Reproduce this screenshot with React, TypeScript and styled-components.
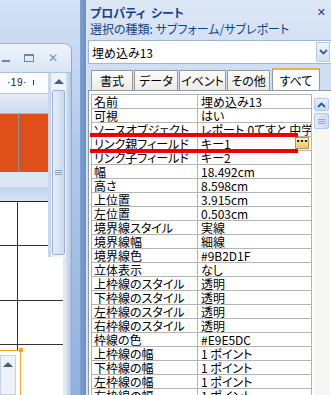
import styled, { createGlobalStyle } from 'styled-components';

const GlobalStyle = createGlobalStyle`
  html, body { margin: 0; padding: 0; }
  body {
    width: 331px;
    height: 395px;
    overflow: hidden;
    font-family: "Noto Sans CJK JP", "Liberation Sans", sans-serif;
    font-size: 12px;
    font-feature-settings: "palt";
  }
`;

type Prop = { name: string; value: string; marked?: boolean };

const props: Prop[] = [
  { name: '名前', value: '埋め込み13' },
  { name: '可視', value: 'はい' },
  { name: 'ソースオブジェクト', value: 'レポート.0てすと 中学校' },
  { name: 'リンク親フィールド', value: 'キー1', marked: true },
  { name: 'リンク子フィールド', value: 'キー2' },
  { name: '幅', value: '18.492cm' },
  { name: '高さ', value: '8.598cm' },
  { name: '上位置', value: '3.915cm' },
  { name: '左位置', value: '0.503cm' },
  { name: '境界線スタイル', value: '実線' },
  { name: '境界線幅', value: '細線' },
  { name: '境界線色', value: '#9B2D1F' },
  { name: '立体表示', value: 'なし' },
  { name: '上枠線のスタイル', value: '透明' },
  { name: '下枠線のスタイル', value: '透明' },
  { name: '左枠線のスタイル', value: '透明' },
  { name: '右枠線のスタイル', value: '透明' },
  { name: '枠線の色', value: '#E9E5DC' },
  { name: '上枠線の幅', value: '1 ポイント' },
  { name: '下枠線の幅', value: '1 ポイント' },
  { name: '左枠線の幅', value: '1 ポイント' },
  { name: '右枠線の幅', value: '1 ポイント' },
];

const tabs = [
  { label: '書式', width: 42 },
  { label: 'データ', width: 44 },
  { label: 'イベント', width: 47 },
  { label: 'その他', width: 43 },
  { label: 'すべて', width: 48, active: true },
];

export default function App() {
  return (
    <Screen>
      <GlobalStyle />
      <LeftArea>
        <DocWindow>
          <TitleBar>
            <MinGlyph />
            <MaxGlyph />
            <CloseGlyph>✕</CloseGlyph>
          </TitleBar>
          <DocBody>
            <Canvas>
              <UpperPart>
                <Designer>
                  <Ruler>
                    <RulerText>·19·</RulerText>
                    <RulerTick />
                  </Ruler>
                  <GapBand />
                  <OrangeSection>
                    <OrangeCell />
                    <OrangeCell />
                  </OrangeSection>
                  <SectionBar />
                  <GridArea $height={55} />
                </Designer>
                <VScroll>
                  <ScrollBtn>
                    <UpArrow />
                  </ScrollBtn>
                  <ScrollThumb>
                    <Grip />
                  </ScrollThumb>
                </VScroll>
              </UpperPart>
              <LowerPart>
                <GridArea $height={93} />
                <Selection>
                  <SelectHandle />
                  <MiniScroll>
                    <UpArrow />
                  </MiniScroll>
                </Selection>
              </LowerPart>
            </Canvas>
            <WindowEdge />
          </DocBody>
        </DocWindow>
      </LeftArea>
      <Splitter />
      <Panel>
        <PanelHeader>
          <PanelTitle>プロパティ シート</PanelTitle>
          <PanelClose>✕</PanelClose>
        </PanelHeader>
        <SelectionType>選択の種類: サブフォーム/サブレポート</SelectionType>
        <Combo>
          <ComboText>埋め込み13</ComboText>
          <ComboButton>
            <svg width="9" height="6" viewBox="0 0 9 6">
              <path d="M1 1 L4.5 4.5 L8 1" stroke="#3c5f97" strokeWidth="1.8" fill="none" />
            </svg>
          </ComboButton>
        </Combo>
        <TabStrip>
          {tabs.map((t) => (
            <Tab key={t.label} $active={!!t.active} style={{ width: t.width }}>
              {t.label}
            </Tab>
          ))}
        </TabStrip>
        <Sheet>
          <Table>
            {props.map((p) => (
              <Row key={p.name}>
                <NameCell>{p.name}</NameCell>
                <ValueCell>
                  {p.value}
                  {p.marked && <BuildButton>···</BuildButton>}
                </ValueCell>
                {p.marked && <RedMark />}
              </Row>
            ))}
          </Table>
          <SheetScroll>
            <SheetScrollBtn>
              <svg width="9" height="6" viewBox="0 0 9 6">
                <path d="M1 5 L4.5 1.5 L8 5" stroke="#2f5a9a" strokeWidth="1.8" fill="none" />
              </svg>
            </SheetScrollBtn>
            <SheetThumb>
              <Grip />
            </SheetThumb>
          </SheetScroll>
        </Sheet>
      </Panel>
    </Screen>
  );
}

const Screen = styled.div`
  display: flex;
  width: 331px;
  height: 395px;
  overflow: hidden;
  background: linear-gradient(to bottom, #d3e2f5 0%, #b3cbeb 35%, #90b0de 100%);
`;

const LeftArea = styled.div`
  width: 80px;
  flex-shrink: 0;
  display: flex;
  flex-direction: column;
  padding-top: 43px;
  box-sizing: border-box;
`;

const DocWindow = styled.div`
  width: 71px;
  flex: 1;
  display: flex;
  flex-direction: column;
  border-top: 1px solid #9cb4d6;
  border-right: 1px solid #8eaad2;
  border-top-right-radius: 8px;
  background: #c9daf0;
  overflow: hidden;
`;

const TitleBar = styled.div`
  height: 28px;
  display: flex;
  align-items: center;
  justify-content: flex-end;
  gap: 14px;
  padding-right: 13px;
  background: linear-gradient(to bottom, #eef4fc, #dae6f5);
  border-bottom: 1px solid #a9bfdc;
  margin-left: -6px;
`;

const MinGlyph = styled.span`
  width: 8px;
  height: 2px;
  background: #6c84a6;
  margin-top: 6px;
`;

const MaxGlyph = styled.span`
  width: 8px;
  height: 5px;
  border: 1px solid #6c84a6;
  border-top-width: 2px;
`;

const CloseGlyph = styled.span`
  font-family: "DejaVu Sans", sans-serif;
  font-size: 12px;
  font-weight: bold;
  color: #7d93b4;
  line-height: 1;
`;

const DocBody = styled.div`
  flex: 1;
  display: flex;
`;

const Canvas = styled.div`
  flex: 1;
  display: flex;
  flex-direction: column;
`;

const UpperPart = styled.div`
  display: flex;
  height: 184px;
`;

const Designer = styled.div`
  flex: 1;
  display: flex;
  flex-direction: column;
  border-right: 3px solid #c6d8ef;
`;

const Ruler = styled.div`
  height: 20px;
  display: flex;
  align-items: center;
  gap: 6px;
  padding-left: 7px;
  background: #fbfcfe;
  border-bottom: 1px solid #b7c9e2;
`;

const RulerText = styled.span`
  font-family: "Liberation Sans", sans-serif;
  font-size: 10px;
  color: #222;
  letter-spacing: 0.5px;
`;

const RulerTick = styled.span`
  width: 1px;
  height: 5px;
  background: #333;
`;

const GapBand = styled.div`
  height: 19px;
  background: linear-gradient(to bottom, #e3ecf8, #cddcf0);
  border-bottom: 1px solid #9fb6d6;
`;

const OrangeSection = styled.div`
  height: 59px;
  display: grid;
  grid-template-columns: 18px 1fr;
  gap: 1px;
  background-color: #8494a8;
`;

const OrangeCell = styled.div`
  background: #de4f19;
`;

const SectionBar = styled.div`
  height: 29px;
  background: linear-gradient(to bottom, #dbe7f6 0%, #dbe7f6 50%, #c3d6ef 52%, #d5e3f5 100%);
  border-bottom: 1px solid #222;
`;

const GridArea = styled.div<{ $height: number }>`
  height: ${(p) => p.$height}px;
  background-color: #fff;
  background-image: linear-gradient(to right, transparent 17px, #333 17px, #333 18px, transparent 18px),
    linear-gradient(to bottom, transparent 43px, #333 43px, #333 44px, transparent 44px);
  background-size: 100% 44px;
`;

const VScroll = styled.div`
  width: 15px;
  display: flex;
  flex-direction: column;
  background: #eef3fa;
`;

const ScrollBtn = styled.div`
  height: 17px;
  display: flex;
  align-items: center;
  justify-content: center;
`;

const UpArrow = styled.span`
  width: 0;
  height: 0;
  border-left: 5px solid transparent;
  border-right: 5px solid transparent;
  border-bottom: 5px solid #4d5f78;
`;

const ScrollThumb = styled.div`
  flex: 1;
  margin: 0 1px 2px;
  display: flex;
  align-items: center;
  justify-content: center;
  border: 1px solid #9db1cf;
  border-radius: 2px;
  background: linear-gradient(to right, #e6eef9, #cbdaee);
`;

const Grip = styled.span`
  width: 7px;
  height: 5px;
  background: repeating-linear-gradient(to bottom, #8ea6c8 0, #8ea6c8 1px, transparent 1px, transparent 2px);
`;

const LowerPart = styled.div`
  flex: 1;
  display: flex;
  flex-direction: column;
  background: #fff;
  border-right: 3px solid #e4e9f0;
`;

const Selection = styled.div`
  flex: 1;
  position: relative;
  border-top: 1px solid #f6a623;
  width: 20px;
  border-right: 1px solid #f6a623;
`;

const SelectHandle = styled.span`
  position: absolute;
  right: -3px;
  top: -3px;
  width: 4px;
  height: 4px;
  background: #f6a623;
`;

const MiniScroll = styled.div`
  width: 16px;
  height: 40px;
  margin-top: 4px;
  display: flex;
  justify-content: center;
  padding-top: 6px;
  box-sizing: border-box;
  background: #eef3fa;
  border: 1px solid #c4d2e4;
`;

const WindowEdge = styled.div`
  width: 5px;
  background: linear-gradient(to right, #d4e2f4, #b4c9e6);
`;

const Splitter = styled.div`
  width: 6px;
  flex-shrink: 0;
  background: linear-gradient(to right, #7d9fd2, #6a90c8);
  border-right: 1px solid #e1eaf6;
`;

const Panel = styled.div`
  flex: 1;
  display: flex;
  flex-direction: column;
  padding: 0 2px 0 1px;
  background: linear-gradient(to bottom, #dde8f6, #cfdef2 60px);
`;

const PanelHeader = styled.div`
  height: 20px;
  display: flex;
  align-items: center;
  justify-content: space-between;
  padding: 2px 6px 0 2px;
`;

const PanelTitle = styled.span`
  font-weight: bold;
  color: #15428b;
  font-size: 12px;
  word-spacing: 3px;
`;

const PanelClose = styled.span`
  font-family: "DejaVu Sans", sans-serif;
  font-size: 11px;
  font-weight: bold;
  color: #15428b;
`;

const SelectionType = styled.div`
  height: 16px;
  line-height: 14px;
  padding-left: 2px;
  color: #15428b;
`;

const Combo = styled.div`
  height: 24px;
  display: flex;
  align-items: center;
  justify-content: space-between;
  margin-top: 2px;
  border: 1px solid #a0b6d4;
  background: #fff;
  box-sizing: border-box;
`;

const ComboText = styled.span`
  padding-left: 3px;
  color: #000;
`;

const ComboButton = styled.div`
  width: 14px;
  height: 20px;
  margin-right: 1px;
  display: flex;
  align-items: center;
  justify-content: center;
  border: 1px solid #b7cae4;
  background: linear-gradient(to bottom, #eef4fc, #d3e1f4);
  box-sizing: border-box;
`;

const TabStrip = styled.div`
  height: 22px;
  margin-top: 4px;
  display: flex;
  align-items: flex-end;
  gap: 1px;
  padding-left: 3px;
`;

const Tab = styled.div<{ $active: boolean }>`
  height: ${(p) => (p.$active ? 22 : 20)}px;
  display: flex;
  align-items: center;
  justify-content: center;
  box-sizing: border-box;
  border: 1px solid #919b9c;
  border-bottom: none;
  border-top: ${(p) => (p.$active ? '2px solid #f4b040' : '1px solid #919b9c')};
  background: ${(p) => (p.$active ? '#fcfcfe' : 'linear-gradient(to bottom, #fefefe, #ecebe6)')};
  color: #000;
  margin-left: ${(p) => (p.$active ? 1 : 0)}px;
`;

const Sheet = styled.div`
  flex: 1;
  display: flex;
  gap: 2px;
  padding: 3px 2px 0 2px;
  background: #fcfcfe;
  border: 1px solid #919b9c;
  border-bottom: none;
  overflow: hidden;
`;

const Table = styled.div`
  width: 220px;
  border-top: 1px solid #b4b4b4;
  border-left: 1px solid #b4b4b4;
`;

const Row = styled.div`
  position: relative;
  height: 14px;
  display: grid;
  grid-template-columns: 106px 1fr;
  box-sizing: border-box;
  border-bottom: 1px solid #b4b4b4;
  line-height: 13px;
  background: #fff;
`;

const NameCell = styled.div`
  padding-left: 2px;
  border-right: 1px solid #b4b4b4;
  white-space: nowrap;
  overflow: hidden;
`;

const ValueCell = styled.div`
  position: relative;
  padding-left: 3px;
  border-right: 1px solid #b4b4b4;
  white-space: nowrap;
  overflow: hidden;
`;

const BuildButton = styled.span`
  position: absolute;
  right: 2px;
  top: 0;
  width: 14px;
  height: 12px;
  line-height: 7px;
  text-align: center;
  font-family: "DejaVu Sans", sans-serif;
  font-size: 10px;
  font-weight: bold;
  color: #000;
  border: 1px solid #b89440;
  background: linear-gradient(to bottom, #fdeebf, #f2c56a);
  box-sizing: border-box;
`;

const RedMark = styled.span`
  position: absolute;
  z-index: 2;
  left: -2px;
  top: -4px;
  width: 208px;
  height: 20px;
  border-top: 4px solid #f00000;
  border-bottom: 4px solid #f00000;
  box-sizing: border-box;
  pointer-events: none;
`;

const SheetScroll = styled.div`
  width: 15px;
  display: flex;
  flex-direction: column;
  gap: 2px;
  padding-top: 4px;
  background: #f6f6f3;
`;

const SheetScrollBtn = styled.div`
  height: 11px;
  display: flex;
  align-items: center;
  justify-content: center;
  border: 1px solid #b4c8e6;
  border-radius: 2px;
  background: linear-gradient(to bottom, #e9f1fc, #c7d9f3);
`;

const SheetThumb = styled.div`
  height: 14px;
  display: flex;
  align-items: center;
  justify-content: center;
  border: 1px solid #b4c8e6;
  border-radius: 2px;
  background: linear-gradient(to right, #e4edf9, #cbdbf2);
`;
